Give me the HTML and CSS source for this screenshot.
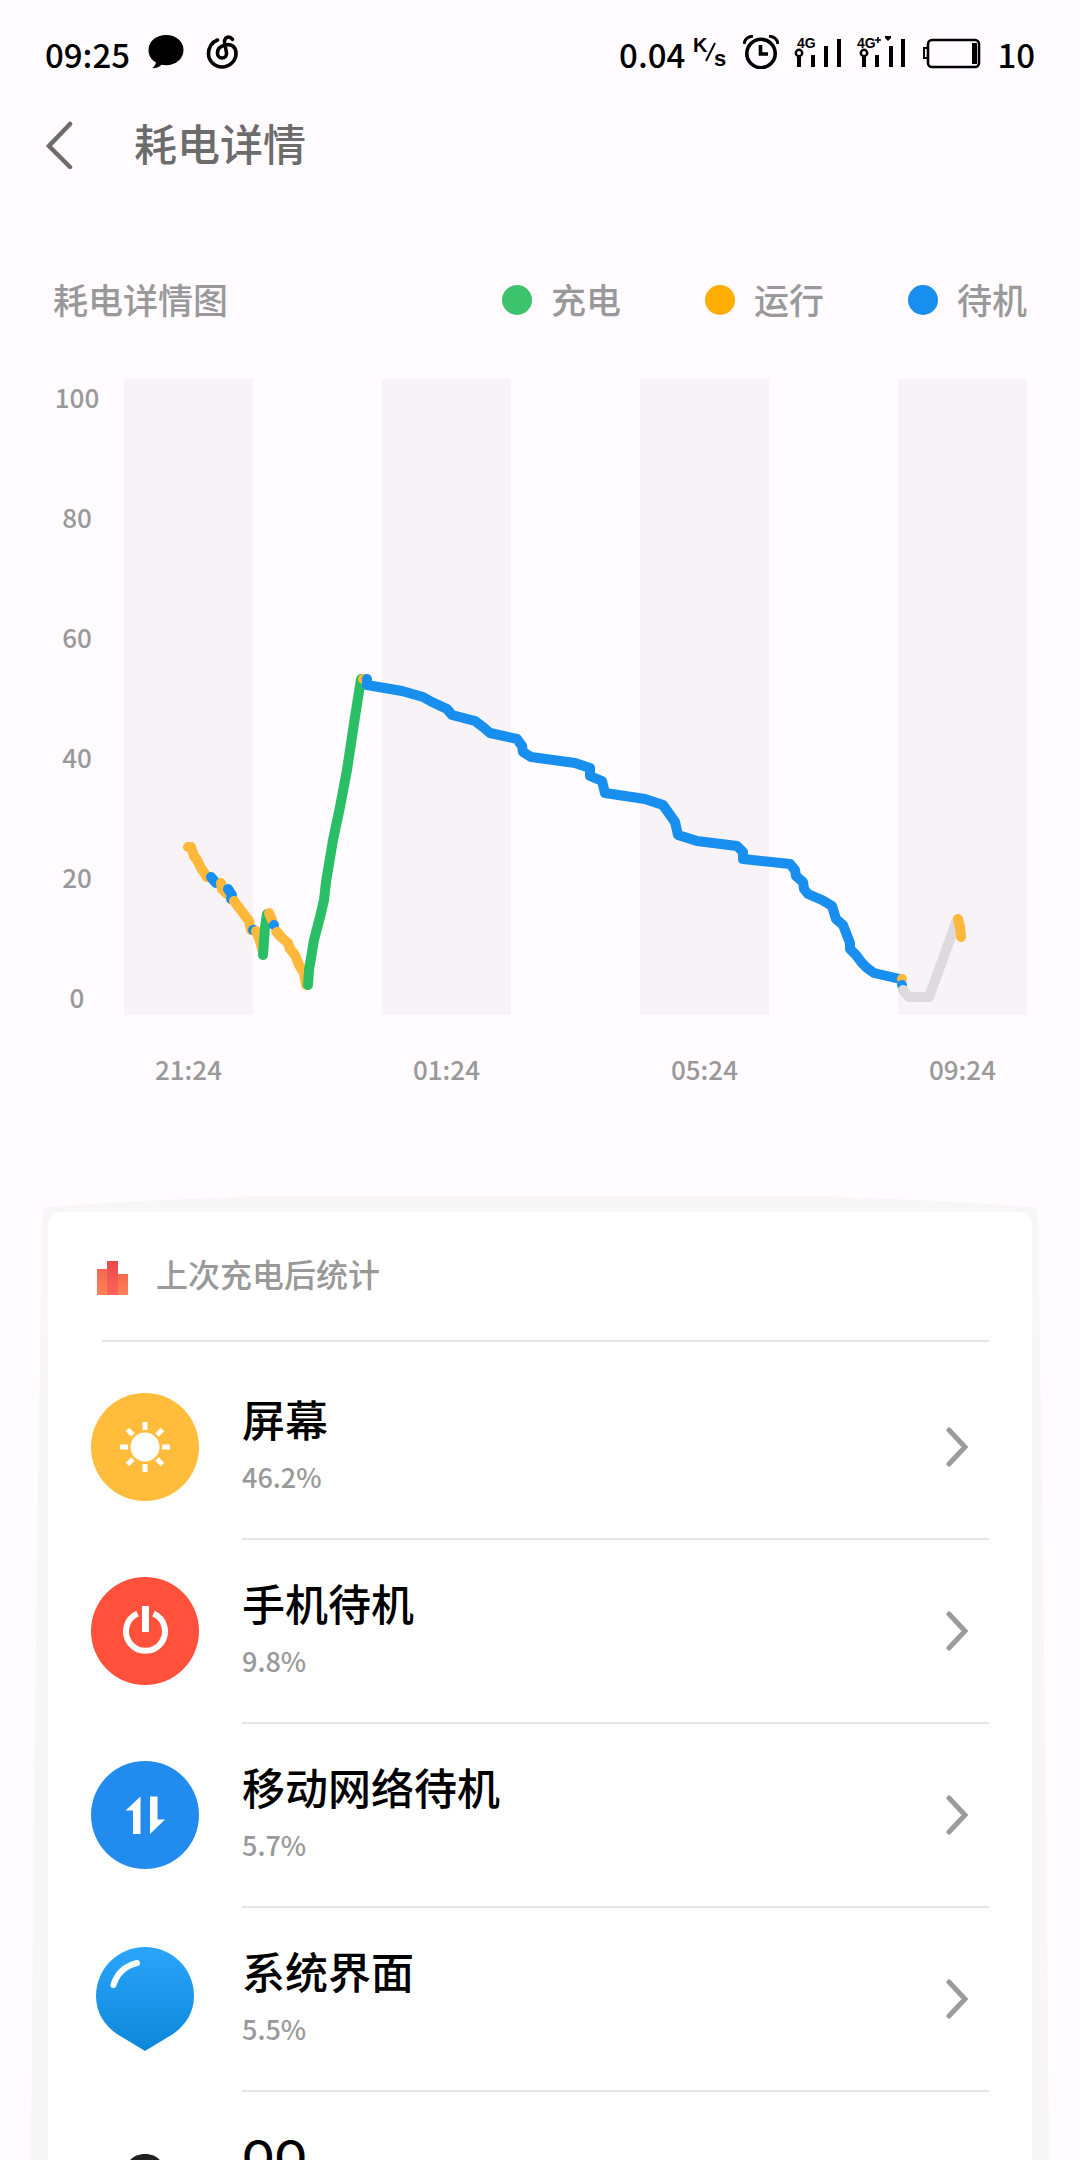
FILE: index.html
```html
<!DOCTYPE html>
<html lang="zh-CN">
<head>
    <meta charset="utf-8" />
    <meta name="viewport" content="width=device-width, initial-scale=1" />
    <title>耗电详情</title>
    <link rel="stylesheet" href="styles.css">
</head>
<body>
<div class="screen">
    <!-- Status bar -->
    <div class="status">
        <span>09:25</span>
        <svg class="chat" width="36" height="34" viewBox="0 0 36 34">
            <path d="M18 0C8 0 .5 6.500.5 15c0 5.500 3 10 7.500 12.500-.5 2-1.500 4-3.500 5.500 3 .8 7-1 9-3.200 1.500.3 3 .4 4.500.4 10 0 17.500-6.500 17.500-15.200S28 0 18 0z" />
        </svg>
        <svg width="32" height="34" viewBox="0 0 32 34" fill="none" stroke="#000" stroke-width="3.600" stroke-linecap="round">
            <path d="M11.500 5C6 7 2.500 12.500 2.500 18.500 2.500 26 8.500 32 16 32s14-6 14-13.500C30 11.500 25 8.500 19 10c-5 1.200-7.500 4-7.500 8 0 3 2 5 4.500 5 3 0 5-2 4.500-5.500L18.500 8c-.5-4 2-6 4-6s3 1 4 2.300" />
        </svg>
        <div class="status-right">
            <span>0.04</span>
            <svg class="speed" width="34" height="34" viewBox="0 0 34 34">
                <text x="0" y="17" font-size="20">K</text>
                <path d="M13 26 22 8" stroke="#000" stroke-width="2" />
                <text x="21" y="31" font-size="22">s</text>
            </svg>
            <svg class="alarm" width="36" height="34" viewBox="0 0 36 34">
                <circle cx="18" cy="18.500" r="14.200" fill="none" stroke="#000" stroke-width="3.600" />
                <path d="M17.500 10v9H25" fill="none" stroke="#000" stroke-width="3.600" />
                <path d="M1 9Q2 2 10 1M35 9Q34 2 26 1" fill="none" stroke="#000" stroke-width="3" />
            </svg>
            <svg class="signal" width="48" height="34" viewBox="0 0 48 34">
                <text x="3" y="13" font-size="14">4G</text>
                <circle cx="5" cy="18" r="3.200" fill="none" stroke="#000" stroke-width="2.400" />
                <path d="M5 22v10M19 20v12M32 11v21M45 4v28" stroke="#000" stroke-width="4" />
            </svg>
            <svg class="signal" width="50" height="34" viewBox="0 0 50 34">
                <text x="0" y="13" font-size="14">4G</text>
                <path d="M21 2v6M18 5h6" stroke="#000" stroke-width="1.600" />
                <path d="M28 1h6v2l-3 3-3-3z" />
                <circle cx="7" cy="18" r="3.200" fill="none" stroke="#000" stroke-width="2.400" />
                <path d="M7 22v10M20 20v12M34 11v21M46 4v28" stroke="#000" stroke-width="4" />
            </svg>
            <svg class="battery" width="58" height="34" viewBox="0 0 58 34">
                <rect x="5" y="5" width="51" height="27" rx="4" fill="none" stroke="#000" stroke-width="2.600" />
                <path d="M5 13H1v10h4" fill="none" stroke="#000" stroke-width="2" />
                <rect x="49" y="8" width="5" height="21" />
            </svg>
            <span>10</span>
        </div>
    </div>

    <!-- Title bar -->
    <header class="appbar">
        <button class="back" type="button" aria-label="返回">
            <svg width="28" height="48" viewBox="0 0 28 48" fill="none" stroke="#6c6c6c" stroke-width="4.500" stroke-linecap="round">
                <path d="M25 3 4 25l21 21" />
            </svg>
        </button>
        <h1>耗电详情</h1>
    </header>

    <!-- Battery chart -->
    <section class="usage">
        <div class="usage-head">
            <h2>耗电详情图</h2>
            <ul class="legend">
                <li class="charging"><span>充电</span></li>
                <li class="running"><span>运行</span></li>
                <li class="standby"><span>待机</span></li>
            </ul>
        </div>
        <div class="chart">
            <div class="y-axis">
                <span>100</span>
                <span>80</span>
                <span>60</span>
                <span>40</span>
                <span>20</span>
                <span>0</span>
            </div>
            <svg class="plot" viewBox="124 379 903 636">
                <g fill="#f7f3f6">
                    <rect x="124" y="379" width="129" height="636" />
                    <rect x="382" y="379" width="129" height="636" />
                    <rect x="640" y="379" width="129" height="636" />
                    <rect x="898" y="379" width="129" height="636" />
                </g>
                <g fill="none" stroke-width="10" stroke-linecap="round" stroke-linejoin="round">
                    <path class="l-running" d="M188 847h3l3 9 3 4 4 8 6 9" />
                    <path class="l-standby" d="M211 877l5 6" />
                    <path class="l-running" d="M221 883l1 6 5 5" />
                    <path class="l-standby" d="M228 889l4 6-1 4" />
                    <path class="l-running" d="M234 901l9 12 6 8 2 9" />
                    <path class="l-standby" d="M253 930h1" />
                    <path class="l-running" d="M256 931l3 7 4 14" />
                    <path class="l-charging" d="M263 955l2-28 2-13" />
                    <path class="l-running" d="M269 913l3 7M276 931l6 7 6 5 2 6 5 6 4 10 5 8 2 12" />
                    <path class="l-standby" d="M274 925v0" />
                    <path class="l-running" d="M277 932l2 3" />
                    <path class="l-charging" d="M308 985l1-15 5-30 6-23 4-17 2-18 7-42 7-33 7-37 8-53 6-38" />
                    <path class="l-running" d="M363 679v0" />
                    <path class="l-standby" d="M367 679v6l35 6 21 6 9 5 15 7 5 6 23 6 8 6 7 6 27 6 5 7 1 6 8 5 44 6 15 5v8l12 5 3 12 40 6 18 6 12 17 3 13 19 6 40 5 6 6v7l47 5 5 6 1 6 7 6 1 7 4 5 14 6 10 6 4 13 7 6 7 18v6l6 6 6 8 5 5 7 5 26 6" />
                    <path class="l-running" d="M902 979v0" />
                    <path class="l-standby" d="M902 985v0" />
                    <path class="l-off" d="M903 990l6 7h20l28-77" />
                    <path class="l-running" d="M958 919l2 8 1 10" />
                </g>
            </svg>
            <div class="x-axis">
                <span>21:24</span>
                <span>01:24</span>
                <span>05:24</span>
                <span>09:24</span>
            </div>
        </div>
    </section>

    <!-- Stats since last charge -->
    <section class="stats">
        <div class="card">
            <div class="card-head">
                <svg width="31" height="34" viewBox="0 0 31 34">
                    <defs>
                        <linearGradient id="bar" x1="0" y1="0" x2="0" y2="1">
                            <stop offset="0" stop-color="#f4664f" />
                            <stop offset="1" stop-color="#ff8458" />
                        </linearGradient>
                        <linearGradient id="bar-mid" x1="0" y1="0" x2="0" y2="1">
                            <stop offset="0" stop-color="#e8494e" />
                            <stop offset="1" stop-color="#ff655a" />
                        </linearGradient>
                    </defs>
                    <rect x="0" y="8" width="11" height="26" fill="url(#bar)" />
                    <rect x="20" y="13" width="11" height="21" fill="url(#bar)" />
                    <rect x="10" y="0" width="11" height="34" fill="url(#bar-mid)" />
                </svg>
                <h2>上次充电后统计</h2>
            </div>
            <hr>
            <ul class="list">
                <li>
                    <a href="#screen">
                        <svg class="icon" viewBox="0 0 108 108">
                            <circle cx="54" cy="54" r="54" fill="#ffbd3b" />
                            <circle cx="54" cy="54" r="14.500" fill="#fff" />
                            <path d="M54 29v8M54 71v8M29 54h8M71 54h8M36.500 36.500l5.500 5.500M66 66l5.500 5.500M36.500 71.500 42 66M66 42l5.500-5.500" stroke="#fff" stroke-width="5" />
                        </svg>
                        <div class="body">
                            <div class="info">
                                <h3>屏幕</h3>
                                <p>46.2%</p>
                            </div>
                            <svg class="arrow" viewBox="0 0 22 40"><path d="M3 3l16 17L3 37" /></svg>
                        </div>
                    </a>
                </li>
                <li>
                    <a href="#standby">
                        <svg class="icon" viewBox="0 0 108 108">
                            <circle cx="54" cy="54" r="54" fill="#ff513b" />
                            <path d="M46.500 36.500a19.500 19.500 0 1 0 16 0" fill="none" stroke="#fff" stroke-width="6" />
                            <path d="M54.500 29v26" stroke="#fff" stroke-width="7" />
                        </svg>
                        <div class="body">
                            <div class="info">
                                <h3>手机待机</h3>
                                <p>9.8%</p>
                            </div>
                            <svg class="arrow" viewBox="0 0 22 40"><path d="M3 3l16 17L3 37" /></svg>
                        </div>
                    </a>
                </li>
                <li>
                    <a href="#network">
                        <svg class="icon" viewBox="0 0 108 108">
                            <circle cx="54" cy="54" r="54" fill="#228cee" />
                            <path d="M49.500 35.500V73H42V49.500h-7.500zM59 35.500h7.500V58.500H74L59 73z" fill="#fff" />
                        </svg>
                        <div class="body">
                            <div class="info">
                                <h3>移动网络待机</h3>
                                <p>5.7%</p>
                            </div>
                            <svg class="arrow" viewBox="0 0 22 40"><path d="M3 3l16 17L3 37" /></svg>
                        </div>
                    </a>
                </li>
                <li>
                    <a href="#systemui">
                        <svg class="icon" viewBox="0 0 108 108">
                            <defs>
                                <linearGradient id="drop" x1="0" y1="0" x2="0" y2="1">
                                    <stop offset="0" stop-color="#2ba5fb" />
                                    <stop offset="1" stop-color="#0c87d8" />
                                </linearGradient>
                            </defs>
                            <path d="M54 2a49 49 0 0 1 49 49c0 16-8 29-21 38-8 5-20 12-28 17-8-5-20-12-28-17C13 80 5 67 5 51A49 49 0 0 1 54 2z" fill="url(#drop)" />
                            <path d="M22.500 40C26 28 34 21 46 18" fill="none" stroke="#fff" stroke-width="6" stroke-linecap="round" />
                        </svg>
                        <div class="body">
                            <div class="info">
                                <h3>系统界面</h3>
                                <p>5.5%</p>
                            </div>
                            <svg class="arrow" viewBox="0 0 22 40"><path d="M3 3l16 17L3 37" /></svg>
                        </div>
                    </a>
                </li>
                <li>
                    <a href="#qq">
                        <svg class="icon" viewBox="0 0 108 108">
                            <path d="M54 25c-13 0-20 9-20 21-6 9-11 20-9 28 2 2 5-1 7-4 4 12 12 17 22 17s18-5 22-17c2 3 5 6 7 4 2-8-3-19-9-28 0-12-7-21-20-21z" fill="#1f2224" />
                        </svg>
                        <div class="body">
                            <div class="info">
                                <h3>QQ</h3>
                            </div>
                            <svg class="arrow" viewBox="0 0 22 40"><path d="M3 3l16 17L3 37" /></svg>
                        </div>
                    </a>
                </li>
            </ul>
        </div>
    </section>
</div>
</body>
</html>
```
FILE: styles.css
```css
* {
    box-sizing: border-box;
}
body, h1, h2, h3, p, ul {
    margin: 0;
    padding: 0;
}
body {
    background-color: #fffbff;
    color: #000;
    font-family: "Noto Sans CJK SC", sans-serif;
    font-weight: 500;
}
h1, h2, h3 {
    font-weight: 500;
}
ul {
    list-style: none;
}
svg {
    display: block;
    flex-shrink: 0;
}
.screen {
    height: 100vh;
    overflow: hidden;
}

/* status bar */
.status {
    display: flex;
    align-items: center;
    height: 75px;
    padding: 33px 45px 0;
    font-size: 33px;
    line-height: 40px;
}
.status svg {
    margin-bottom: 4px;
}
.status text {
    font-family: "Liberation Sans", sans-serif;
    font-weight: bold;
}
.chat {
    margin: 0 22px 0 18px;
}
.status-right {
    display: flex;
    align-items: center;
    margin-left: auto;
}
.speed {
    margin-left: 8px;
}
.alarm {
    margin-left: 16px;
}
.signal {
    margin-left: 15px;
}
.battery {
    margin: 0 16px;
}

/* title bar */
.appbar {
    display: flex;
    align-items: center;
    height: 140px;
    padding: 0 45px;
}
.appbar h1 {
    margin-left: 61px;
    padding-bottom: 6px;
    color: #6c6c6c;
    font-size: 43px;
}
.back {
    padding: 0;
    border: none;
    background: none;
}

/* chart */
.usage {
    padding: 58px 53px 0;
    color: #999;
}
.usage-head {
    display: flex;
    justify-content: space-between;
    align-items: center;
    height: 54px;
    margin-bottom: 52px;
}
.usage-head h2, .legend {
    font-size: 35px;
}
.usage-head h2, .legend span {
    padding-bottom: 3px;
}
.legend {
    display: flex;
    gap: 84px;
}
.legend li {
    display: flex;
    align-items: center;
    gap: 19px;
}
.legend li::before {
    content: "";
    width: 30px;
    height: 30px;
    border-radius: 50%;
}
.charging::before {
    background-color: #3cc36c;
}
.running::before {
    background-color: #ffae00;
}
.standby::before {
    background-color: #188eee;
}
.chart {
    display: grid;
    grid-template-columns: 48px 1fr;
    column-gap: 23px;
    row-gap: 36px;
}
.y-axis, .x-axis {
    text-align: center;
    font-size: 26px;
    line-height: 36px;
}
.y-axis {
    display: flex;
    flex-direction: column;
    justify-content: space-between;
}
.plot {
    width: 100%;
}
.l-charging {
    stroke: #2abf64;
}
.l-running {
    stroke: #ffb83a;
}
.l-standby {
    stroke: #188eee;
}
.l-off {
    stroke: #dcdadd;
}
.x-axis {
    display: grid;
    grid-template-columns: repeat(3, 1fr 1fr) 1fr;
    grid-column: 2;
}
.x-axis span:nth-child(2) {
    grid-column: 3;
}
.x-axis span:nth-child(3) {
    grid-column: 5;
}
.x-axis span:nth-child(4) {
    grid-column: 7;
}

/* card with the bowed grey edge behind it */
.stats {
    margin: 109px 30px 0;
    padding: 16px 18px 0;
    background-color: #f7f7f7;
    clip-path: polygon(12px 16px, 16px 11px, 11% 5px, 22% 0, 78% 0, 89% 5px, calc(100% - 16px) 11px, calc(100% - 12px) 16px, calc(100% - 8px) 300px, calc(100% - 4px) 600px, 100% 100%, 0 100%, 4px 600px, 8px 300px);
}
.card {
    border-radius: 14px 14px 0 0;
    background-color: #fff;
}
.card-head {
    display: flex;
    align-items: center;
    gap: 28px;
    height: 128px;
    padding: 0 49px;
}
.card-head svg {
    margin-top: 4px;
}
.card-head h2 {
    padding-bottom: 6px;
    color: #999;
    font-size: 32px;
}
hr {
    height: 2px;
    margin: 0 43px 14px 54px;
    border: none;
    background-color: #e6e6e6;
}
.list a {
    display: flex;
    align-items: center;
    gap: 43px;
    padding: 0 43px;
    color: inherit;
    text-decoration: none;
}
.icon {
    width: 108px;
    height: 108px;
    margin-bottom: 2px;
}
.body {
    display: flex;
    flex: 1;
    align-items: center;
    justify-content: space-between;
    height: 184px;
    padding-right: 21px;
    border-bottom: 2px solid #e6e6e6;
}
.info {
    height: 106px;
}
.info h3 {
    margin-bottom: 17px;
    font-size: 43px;
    line-height: 48px;
}
.info p {
    color: #999;
    font-size: 27px;
    line-height: 36px;
}
.arrow {
    width: 22px;
    height: 40px;
    fill: none;
    stroke: #9b9b9b;
    stroke-width: 5;
    stroke-linecap: round;
}
```
